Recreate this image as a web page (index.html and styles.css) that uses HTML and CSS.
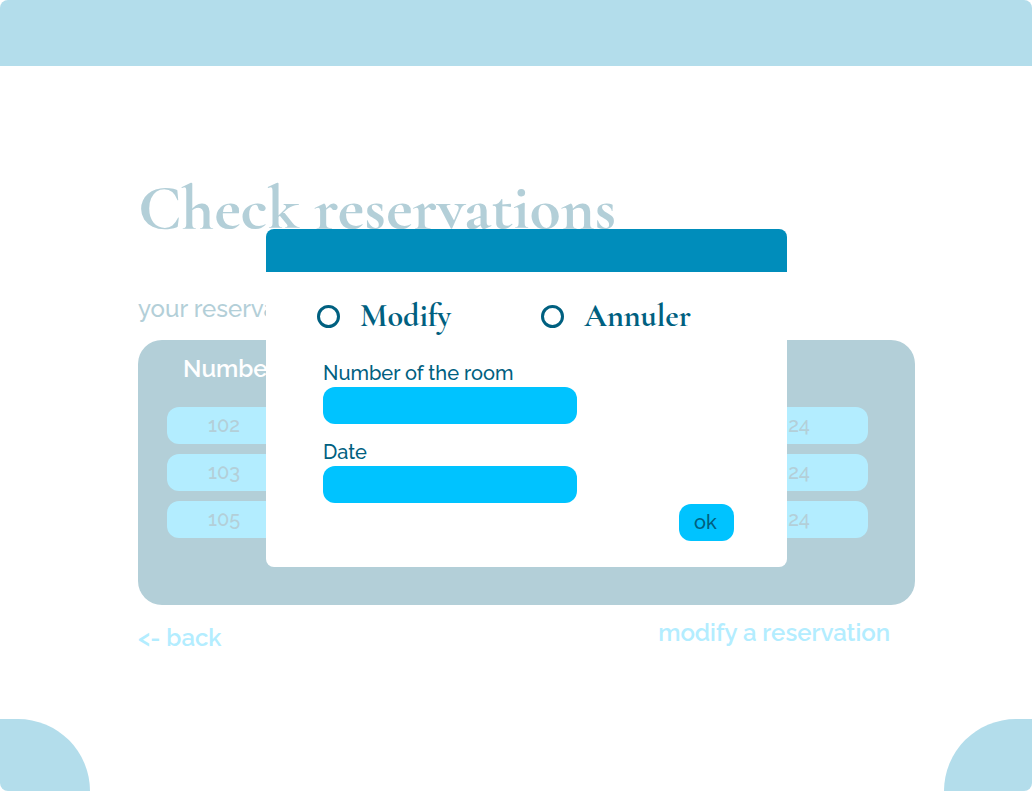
FILE: index.html
```html
<!DOCTYPE html>
<html lang="en">
<head>
<meta charset="utf-8">
<title>Check reservations</title>
<link rel="stylesheet" href="styles.css">
</head>
<body>
<div class="page">
  <header class="topbar"></header>
  <main class="content">
    <h1 class="title">Check reservations</h1>
    <p class="subtitle">your reservations</p>
    <section class="panel">
      <table class="bookings">
        <thead>
          <tr><th scope="col">Number</th><th></th></tr>
        </thead>
        <tbody>
          <tr><td>102</td><td class="date">2024</td></tr>
          <tr><td>103</td><td class="date">2024</td></tr>
          <tr><td>105</td><td class="date">2024</td></tr>
        </tbody>
      </table>
    </section>
    <nav class="links">
      <a class="link back" href="#">&lt;- back</a>
      <a class="link" href="#">modify a reservation</a>
    </nav>
    <form class="dialog" role="dialog" aria-label="Reservation">
      <div class="dialog-bar"></div>
      <div class="dialog-body">
        <div class="choices">
          <label class="choice"><input class="radio" type="radio" name="action">Modify</label>
          <label class="choice"><input class="radio" type="radio" name="action">Annuler</label>
        </div>
        <div class="fields">
          <label class="label" for="room">Number of the room</label>
          <input class="input" id="room" type="text">
          <label class="label" for="date">Date</label>
          <input class="input" id="date" type="text">
        </div>
        <div class="actions"><button class="ok" type="button">ok</button></div>
      </div>
    </form>
  </main>
  <footer class="corners">
    <div class="corner corner-left"></div>
    <div class="corner corner-right"></div>
  </footer>
</div>
</body>
</html>
```
FILE: styles.css
```css
* { box-sizing: border-box; }
body {
  margin: 0;
  background: #fff;
  font-family: Raleway, Lato, sans-serif;
  font-weight: 500;
}
.page {
  display: flex;
  flex-direction: column;
  min-height: 100vh;
  border-radius: 8px;
  overflow: hidden;
}
.topbar { height: 66px; background: #b3ddeb; }
.content {
  position: relative;
  flex: 1;
  margin: 0 117px 0 138px;
  padding-top: 110px;
}
.title {
  margin: 0 0 55px;
  font: bold 64px/64px "Cormorant Garamond", "Liberation Serif", serif;
  color: #b3cfd8;
}
.subtitle {
  margin: 0 0 17px;
  font-size: 24px;
  line-height: 28px;
  color: #b3cfd8;
}
.panel {
  padding: 4px 47px 57px 29px;
  border-radius: 24px;
  background: #b3cfd8;
}
.bookings {
  width: 100%;
  border-spacing: 0 10px;
}
.bookings th {
  height: 43px;
  padding: 1px 0 0 16px;
  vertical-align: top;
  text-align: left;
  font-size: 24px;
  line-height: 28px;
  font-weight: 600;
  color: #fff;
}
.bookings td {
  height: 37px;
  padding: 0 0 2px 41px;
  background: #b3edff;
  font-size: 20px;
  line-height: 24px;
  color: #b3cfd8;
}
.bookings td:first-child { border-radius: 12px 0 0 12px; }
.bookings td:last-child { border-radius: 0 12px 12px 0; }
.bookings .date { padding-right: 58px; text-align: right; }
.links {
  display: flex;
  justify-content: space-between;
  padding: 14px 25px 0 0;
}
.link {
  font-size: 24px;
  line-height: 28px;
  font-weight: 600;
  color: #b3edff;
  text-decoration: none;
}
.back { margin-top: 5px; }
.dialog {
  position: absolute;
  top: 163px;
  left: 0;
  right: 0;
  width: 521px;
  margin: 0 auto;
  border-radius: 8px;
  overflow: hidden;
  background: #fff;
  color: #006080;
}
.dialog-bar { height: 43px; background: #008dbb; }
.dialog-body { padding: 26px 53px 26px 51px; }
.choices {
  display: grid;
  grid-template-columns: 224px 1fr;
}
.choice {
  display: flex;
  align-items: center;
  gap: 20px;
  font: bold 32px/36px "Cormorant Garamond", "Liberation Serif", serif;
}
.radio {
  appearance: none;
  width: 23px;
  height: 23px;
  margin: 0;
  border: 3px solid #006080;
  border-radius: 50%;
}
.radio:checked { background: #00c3ff; }
.fields {
  display: flex;
  flex-direction: column;
  align-items: flex-start;
  padding: 27px 0 0 6px;
}
.label { padding-bottom: 2px; font-size: 20px; line-height: 24px; }
.input {
  width: 254px;
  height: 37px;
  margin: 0 0 16px;
  padding: 0 12px;
  border: 0;
  border-radius: 12px;
  background: #00c3ff;
  color: #006080;
  font: inherit;
}
.input:last-child { margin-bottom: 1px; }
.actions { display: flex; justify-content: flex-end; }
.ok {
  width: 55px;
  height: 37px;
  padding: 0 2px 2px 0;
  border: 0;
  border-radius: 12px;
  background: #00c3ff;
  color: #006080;
  font: inherit;
  font-size: 20px;
}
.corners { display: flex; justify-content: space-between; }
.corner { width: 90px; height: 72px; background: #b3ddeb; }
.corner-left { border-top-right-radius: 72px; }
.corner-right { width: 88px; border-top-left-radius: 72px; }
```
